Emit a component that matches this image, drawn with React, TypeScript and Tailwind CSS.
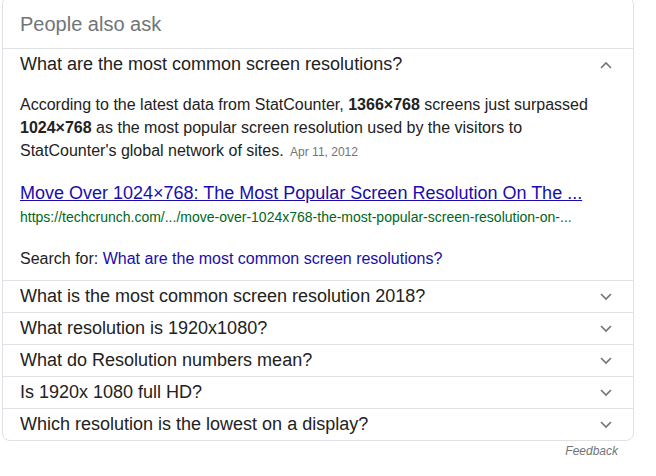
const questions = [
  "What is the most common screen resolution 2018?",
  "What resolution is 1920x1080?",
  "What do Resolution numbers mean?",
  "Is 1920x 1080 full HD?",
  "Which resolution is the lowest on a display?",
];

function Chevron({ up = false }: { up?: boolean }) {
  return (
    <svg width="12" height="8" viewBox="0 0 12 8" className="text-[#70757a]">
      <path
        d={up ? "M1 7 L6 2 L11 7" : "M1 1 L6 6 L11 1"}
        fill="none"
        stroke="currentColor"
        strokeWidth="1.6"
      />
    </svg>
  );
}

export default function App() {
  return (
    <div className="w-[656px] h-[476px] bg-white font-['Liberation_Sans',Arial,sans-serif] overflow-hidden">
      <div className="ml-[2px] -mt-[4px] w-[632px] border border-[#dfe1e5] rounded-lg">
        {/* Header */}
        <div className="h-[51px] pl-[17px] pt-[14px] text-[20px] leading-[26px] text-[#70757a]">
          People also ask
        </div>

        {/* Expanded question */}
        <div className="border-t border-[#dfe1e5]">
          <div className="h-[31px] flex items-center justify-between pl-[17px] pr-[21px] text-[18px] text-[#222]">
            <span>What are the most common screen resolutions?</span>
            <Chevron up />
          </div>
          <div className="pl-[17px] pr-4 pt-[13px] pb-[9px] text-[16px] text-[#222]">
            <p className="leading-[23px]">
              According to the latest data from StatCounter, <b>1366×768</b> screens just surpassed{" "}
              <b>1024×768</b> as the most popular screen resolution used by the visitors to
              StatCounter's global network of sites.{" "}
              <span className="ml-[2px] text-[12px] text-[#70757a]">Apr 11, 2012</span>
            </p>
            <a className="block mt-[17px] text-[18px] leading-[24px] text-[#1a0dab] underline">
              Move Over 1024×768: The Most Popular Screen Resolution On The ...
            </a>
            <div className="text-[14px] leading-[24px] text-[#006621]">
              https://techcrunch.com/.../move-over-1024x768-the-most-popular-screen-resolution-on-...
            </div>
            <div className="mt-[18px] leading-[24px]">
              Search for: <a className="text-[#1a0dab]">What are the most common screen resolutions?</a>
            </div>
          </div>
        </div>

        {questions.map((q) => (
          <div
            key={q}
            className="h-[32px] border-t border-[#dfe1e5] flex items-center justify-between pl-[17px] pr-[21px] text-[18px] text-[#222]"
          >
            <span>{q}</span>
            <Chevron />
          </div>
        ))}
      </div>
      <div className="w-[618px] text-right mt-[3px] text-[12px] leading-[14px] italic text-[#70757a]">Feedback</div>
    </div>
  );
}
